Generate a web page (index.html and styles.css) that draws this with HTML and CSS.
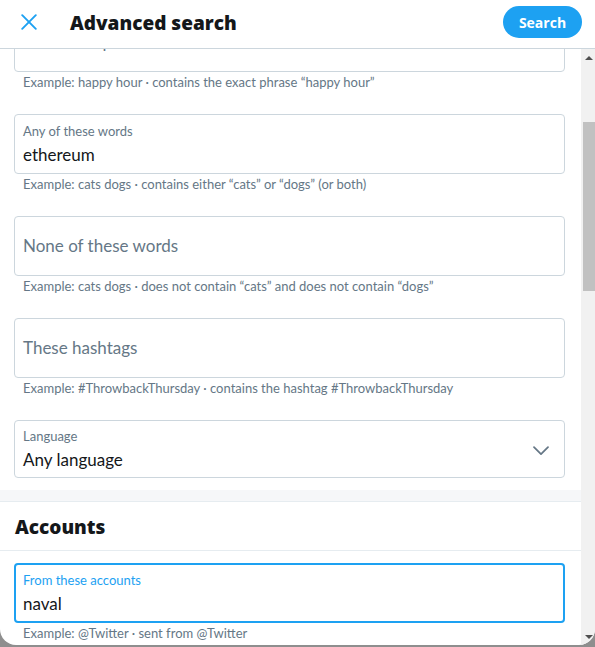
FILE: index.html
```html
<!DOCTYPE html>
<html lang="en">
<head>
<meta charset="utf-8">
<title>Advanced search</title>
<link rel="stylesheet" href="styles.css">
</head>
<body>
<div class="modal">
  <header class="topbar">
    <button class="close" aria-label="Close">
      <svg width="16" height="16" viewBox="0 0 16 16"><path d="M1.2 1.2 L14.8 14.8 M14.8 1.2 L1.2 14.8" stroke="#1da1f2" stroke-width="1.9" stroke-linecap="round" fill="none"/></svg>
    </button>
    <h1 class="title">Advanced search</h1>
    <button class="search-btn">Search</button>
  </header>
  <div class="body">
    <div class="scroll">
      <div class="fields fields-scrolled">
        <div class="field">
          <div class="input input-empty"><span class="placeholder">This exact phrase</span></div>
          <div class="hint">Example: happy hour · contains the exact phrase “happy hour”</div>
        </div>
        <div class="field">
          <div class="input"><span class="label">Any of these words</span><span class="value">ethereum</span></div>
          <div class="hint">Example: cats dogs · contains either “cats” or “dogs” (or both)</div>
        </div>
        <div class="field">
          <div class="input input-empty"><span class="placeholder">None of these words</span></div>
          <div class="hint">Example: cats dogs · does not contain “cats” and does not contain “dogs”</div>
        </div>
        <div class="field">
          <div class="input input-empty"><span class="placeholder">These hashtags</span></div>
          <div class="hint">Example: #ThrowbackThursday · contains the hashtag #ThrowbackThursday</div>
        </div>
        <div class="field field-last">
          <div class="input select">
            <div class="select-text"><span class="label">Language</span><span class="value">Any language</span></div>
            <svg class="chevron" width="16" height="10" viewBox="0 0 16 10"><path d="M1 1.2 L8 8.2 L15 1.2" stroke="#657786" stroke-width="1.7" fill="none" stroke-linecap="round" stroke-linejoin="round"/></svg>
          </div>
        </div>
      </div>
      <div class="divider"></div>
      <h2 class="section-title">Accounts</h2>
      <div class="fields fields-accounts">
        <div class="field">
          <div class="input input-focused"><span class="label">From these accounts</span><span class="value">naval</span></div>
          <div class="hint">Example: @Twitter · sent from @Twitter</div>
        </div>
      </div>
    </div>
    <div class="scrollbar">
      <div class="sb-arrow"><span class="tri-up"></span></div>
      <div class="sb-track"><div class="sb-thumb"></div></div>
      <div class="sb-arrow"><span class="tri-down"></span></div>
    </div>
  </div>
</div>
</body>
</html>
```

FILE: styles.css
```css
* { box-sizing: border-box; }

html, body {
  margin: 0;
  padding: 0;
  height: 100%;
  overflow: hidden;
}

body {
  background: #8e8e8e;
  font-family: Lato, "Open Sans", "Liberation Sans", sans-serif;
  color: #14171a;
}

.modal {
  width: 595px;
  height: 645px;
  background: #fff;
  border-radius: 0 0 16px 16px;
  overflow: hidden;
  display: flex;
  flex-direction: column;
}

.topbar {
  flex: 0 0 auto;
  height: 49px;
  padding: 0 13px 4px 21px;
  border-bottom: 1px solid #ccd6dd;
  display: flex;
  align-items: center;
}

.close {
  border: 0;
  background: none;
  padding: 0;
  width: 16px;
  height: 16px;
  display: flex;
}

.title {
  margin: 0 0 0 33px;
  font-family: "Open Sans", Lato, sans-serif;
  font-size: 19px;
  font-weight: 800;
  flex: 1 1 auto;
  line-height: 20px;
  padding-top: 1px;
}

.search-btn {
  border: 0;
  background: #1da1f2;
  color: #fff;
  font-family: "Open Sans", Lato, sans-serif;
  font-weight: 700;
  font-size: 14px;
  height: 32px;
  width: 79px;
  border-radius: 16px;
  padding: 0;
}

.body {
  flex: 1 1 auto;
  display: flex;
  min-height: 0;
}

.scroll {
  flex: 1 1 auto;
  overflow: hidden;
}

.fields {
  padding: 0 16px 0 14px;
}

.fields-scrolled {
  margin-top: -37px;
}

.fields-accounts {
  padding-top: 12px;
}

.field {
  padding-bottom: 22px;
}

.field-last {
  padding-bottom: 12px;
}

.input {
  height: 60px;
  border: 1px solid #ccd6dd;
  border-radius: 4px;
  padding: 8px 8px 6px;
  display: flex;
  flex-direction: column;
}

.input-empty {
  justify-content: center;
  padding-top: 0;
  padding-bottom: 0;
}

.input-focused {
  border: 2px solid #1da1f2;
  padding: 7px 7px 5px;
}

.input-focused .label {
  color: #1da1f2;
}

.label {
  font-size: 13px;
  line-height: 16px;
  color: #657786;
}

.value {
  margin-top: 4px;
  font-size: 17px;
  line-height: 24px;
  color: #14171a;
}

.placeholder {
  font-size: 17px;
  line-height: 20px;
  color: #657786;
}

.select {
  height: 58px;
  padding: 7px 15px 4px 8px;
  flex-direction: row;
  align-items: center;
}

.select-text {
  flex: 1 1 auto;
  display: flex;
  flex-direction: column;
  align-self: flex-start;
}

.hint {
  font-size: 13px;
  line-height: 20px;
  color: #657786;
  padding-left: 9px;
}

.divider {
  height: 12px;
  background: #f6f7f9;
  border-bottom: 1px solid #e6ecf0;
}

.section-title {
  margin: 0;
  height: 49px;
  padding: 1px 15px 0;
  font-family: "Open Sans", Lato, sans-serif;
  font-size: 19px;
  font-weight: 800;
  line-height: 48px;
  border-bottom: 1px solid #e6ecf0;
}

.scrollbar {
  flex: 0 0 14px;
  background: #f1f1f1;
  display: flex;
  flex-direction: column;
}

.sb-arrow {
  flex: 0 0 17px;
  display: flex;
  align-items: center;
  padding-left: 4px;
}

.tri-up {
  width: 0;
  height: 0;
  border-left: 4px solid transparent;
  border-right: 4px solid transparent;
  border-bottom: 4px solid #505050;
}

.tri-down {
  width: 0;
  height: 0;
  border-left: 4px solid transparent;
  border-right: 4px solid transparent;
  border-top: 4px solid #505050;
}

.sb-track {
  flex: 1 1 auto;
  padding-top: 56px;
}

.sb-thumb {
  margin-left: 2px;
  height: 169px;
  background: #c1c1c1;
}
```
